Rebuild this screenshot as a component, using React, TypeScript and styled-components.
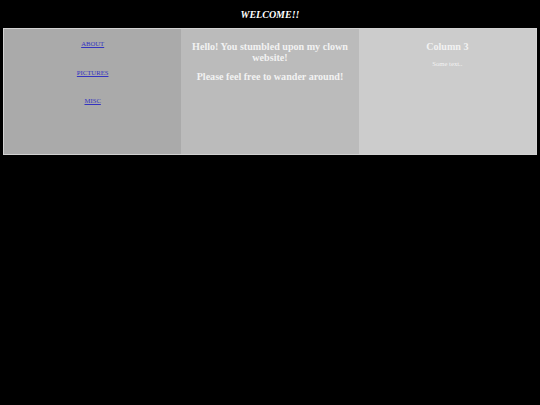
import styled, { createGlobalStyle } from 'styled-components';

const GlobalStyle = createGlobalStyle`
  html, body {
    margin: 0;
    padding: 0;
    background-color: #000;
    font-family: "Liberation Serif", "Times New Roman", serif;
  }
`;

const Header = styled.header`
  height: 28px;
  display: flex;
  justify-content: center;
  align-items: center;
`;

const Title = styled.h3`
  margin: 0;
  font-size: 10px;
  font-style: italic;
  font-weight: bold;
  color: #fff;
`;

const Row = styled.section`
  margin: 0 3px;
  border: 1px solid #d2d2d2;
  display: grid;
  grid-template-columns: 1fr 1fr 1fr;
  height: 125px;
`;

const Column = styled.div<{ shade: string }>`
  background-color: ${(props) => props.shade};
  padding: 12px 8px;
  text-align: center;
`;

const NavList = styled.nav`
  display: flex;
  flex-direction: column;
  align-items: center;
  gap: 20.5px;
  margin-top: -1px;
`;

const NavLink = styled.a`
  font-size: 6.7px;
  line-height: 8px;
  color: #3434c0;
  text-decoration: underline;
`;

const Heading = styled.h2`
  margin: 0 0 8px;
  font-size: 10.1px;
  line-height: 11px;
  font-weight: bold;
  color: #f2f2f2;
`;

const SmallText = styled.p`
  margin: 0;
  font-size: 6.7px;
  line-height: 8px;
  color: #f2f2f2;
`;

const links = ['ABOUT', 'PICTURES', 'MISC'];

const App = () => {
  return (
    <>
      <GlobalStyle />
      <Header>
        <Title>WELCOME!!</Title>
      </Header>
      <Row>
        <Column shade="#aaaaaa">
          <NavList>
            {links.map((name) => (
              <NavLink key={name} href="#">
                {name}
              </NavLink>
            ))}
          </NavList>
        </Column>
        <Column shade="#bbbbbb">
          <Heading>Hello! You stumbled upon my clown website!</Heading>
          <Heading>Please feel free to wander around!</Heading>
        </Column>
        <Column shade="#cccccc">
          <Heading>Column 3</Heading>
          <SmallText>Some text..</SmallText>
        </Column>
      </Row>
    </>
  );
};

export default App;
